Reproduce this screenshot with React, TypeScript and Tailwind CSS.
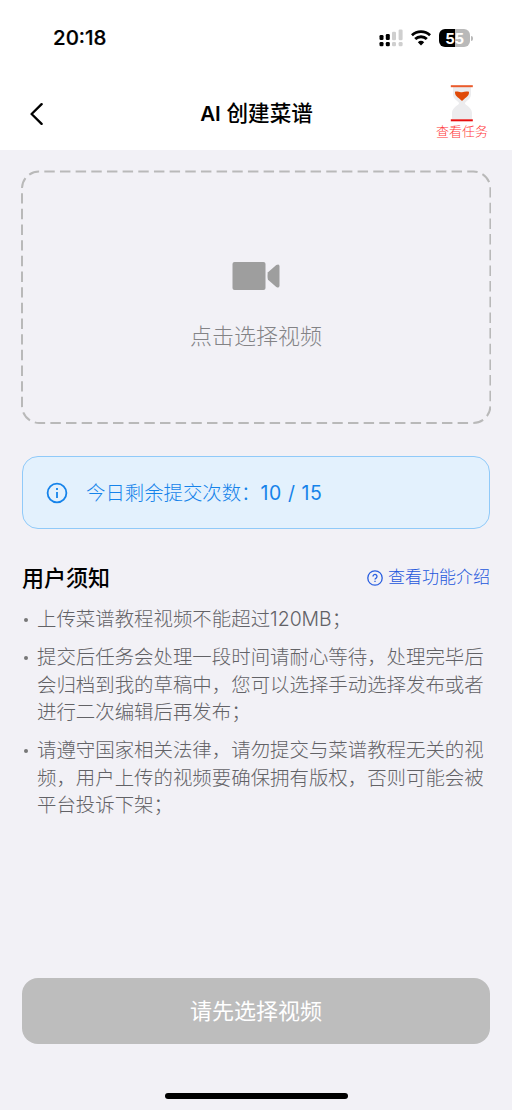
import type { ReactNode } from 'react'

const NOTES: string[][] = [
  ['上传菜谱教程视频不能超过120MB；'],
  ['提交后任务会处理一段时间请耐心等待，处理完毕后', '会归档到我的草稿中，您可以选择手动选择发布或者', '进行二次编辑后再发布；'],
  ['请遵守国家相关法律，请勿提交与菜谱教程无关的视', '频，用户上传的视频要确保拥有版权，否则可能会被', '平台投诉下架；'],
]

function StatusBar() {
  return (
    <div className="flex h-[76px] items-center justify-between pl-[53px] pr-[39px]">
      <span className="pt-px text-[20.5px] font-medium leading-none [-webkit-text-stroke:0.2px_#000]">20:18</span>
      <div className="flex items-center gap-[8px]">
        <svg width="24" height="18" viewBox="0 0 24 18">
          <g fill="#000">
            <rect x="0.5" y="6" width="4" height="5" rx="1.3" />
            <rect x="6.8" y="5" width="4" height="6" rx="1.3" />
            <rect x="0.5" y="13" width="4" height="4.3" rx="1.3" />
            <rect x="6.8" y="13" width="4" height="4.3" rx="1.3" />
          </g>
          <g fill="#cfcfcf">
            <rect x="13" y="2.7" width="4" height="8.6" rx="1.3" />
            <rect x="19.6" y="0.4" width="4" height="10.9" rx="1.3" />
            <rect x="13" y="13" width="4" height="4.3" rx="1.3" />
            <rect x="19.6" y="13" width="4" height="4.3" rx="1.3" />
          </g>
        </svg>
        <svg width="20" height="16" viewBox="0 0 20 16" fill="none" stroke="#000" strokeWidth="2.9">
          <path d="M0.9 5.3a13.2 13.2 0 0 1 18.2 0" />
          <path d="M4.2 9a8.4 8.4 0 0 1 11.6 0" />
          <path d="M10 15.6 6.8 12.3a4.7 4.7 0 0 1 6.4 0z" fill="#000" stroke="none" />
        </svg>
        <div className="flex items-center gap-px">
          <div className="flex h-[18px] w-[31px] items-center justify-center rounded-[6px] bg-linear-to-r from-black from-53% to-[#b9b9b9] to-53% text-[15px] font-bold leading-none tracking-[-0.3px] text-white">
            55
          </div>
          <div className="h-[5px] w-[2px] rounded-r-full bg-[#b9b9b9]" />
        </div>
      </div>
    </div>
  )
}

function Hourglass() {
  return (
    <svg width="24" height="37" viewBox="0 0 24 37">
      <path d="M3 2h18v7c0 4-2.800 6-5 7.700q-2 1.500 0 3c2.800 2 6 4.300 6 8.300v6H2v-6c0-4 3.200-6.300 6-8.300q2-1.500 0-3C5.800 15 3 13 3 9z" fill="#ececee" />
      <path d="M5 6.800C7.500 6 9.500 7.800 12 7.200S16.500 6.200 19 6.800C19.300 10.500 16.500 12.300 14.500 13.700L12.300 15.700H11.700L9.500 13.700C7.500 12.300 4.700 10.500 5 6.800z" fill="#e04a08" />
      <rect x="0.800" y="0.200" width="22" height="2" fill="#ea5b2c" />
      <rect x="0.800" y="34.300" width="22" height="2" fill="#e60f0f" />
    </svg>
  )
}

function Header() {
  return (
    <div className="grid h-[74px] grid-cols-[1fr_auto_1fr] items-center pr-[24px] pl-[29px]">
      <svg width="15" height="23" viewBox="0 0 15 23" fill="none" stroke="#000" strokeWidth="2.4" strokeLinecap="round" strokeLinejoin="round">
        <path d="M12.600 2.200 2.600 12 12.600 21.800" />
      </svg>
      <h1 className="-ml-[4px] pt-px text-[21.600px] font-medium leading-[30px]">
        <span className="text-[20.500px] font-semibold">AI</span> 创建菜谱
      </h1>
      <div className="flex flex-col items-center justify-self-end">
        <Hourglass />
        <span className="-mt-px text-[13px] font-light leading-[20px] text-[#ff3838]">查看任务</span>
      </div>
    </div>
  )
}

function UploadBox() {
  return (
    <div className="relative flex h-[254px] flex-col items-center">
      <svg className="absolute inset-0" width="470" height="254" viewBox="0 0 470 254" fill="none">
        <rect x="1" y="1.500" width="468.400" height="251.400" rx="17" stroke="#b9b9b9" strokeWidth="2" pathLength="1409" strokeDasharray="10.450 5.206" strokeDashoffset="-5.300" />
      </svg>
      <svg className="mt-[92px]" width="48" height="28" viewBox="0 0 48 28" fill="#9e9e9e">
        <rect x="0.500" y="0" width="33" height="28" rx="2" />
        <path d="M36 10.200 44.300 3.100Q47.500 1.500 47.500 4.500V23.500Q47.500 26.500 44.300 24.900L36 17.800Q35.500 17 35.500 14T36 10.200z" />
      </svg>
      <span className="mt-[30px] text-[22px] font-light leading-[32px] text-[#838386]">点击选择视频</span>
    </div>
  )
}

function QuotaBanner() {
  return (
    <div className="mx-px mt-[32px] flex h-[73px] items-center rounded-[16px] border-[1.500px] border-[#90caf9] bg-[#e3f1fd] pl-[23px] text-[19.400px] text-[#1583ea]">
      <svg width="22" height="22" viewBox="0 0 22 22" fill="none" stroke="#1583ea" strokeWidth="1.800">
        <circle cx="11" cy="11" r="9.400" />
        <path d="M11 10v6" />
        <path d="M11 6v2" />
      </svg>
      <span className="mt-[2px] ml-[18px] font-light">今日剩余提交次数：</span>
      <span className="mt-[2px] tracking-[0.6px]">10 / 15</span>
    </div>
  )
}

function Note({ children }: { children: ReactNode }) {
  return (
    <li className="flex text-[19.430px] font-light leading-[27.500px] text-[#626266]">
      <span className="mt-[12px] mr-[9px] ml-[2px] size-[4px] shrink-0 rounded-full bg-[#777]" />
      <div className="whitespace-nowrap">{children}</div>
    </li>
  )
}

export default function App() {
  return (
    <div className="flex h-[1110px] w-[512px] flex-col overflow-hidden bg-[#f2f1f6] font-['Inter','Noto_Sans_CJK_SC',sans-serif] text-black" lang="zh-CN">
      <div className="bg-white">
        <StatusBar />
        <Header />
      </div>
      <main className="flex flex-1 flex-col px-[21px] pt-[20px]">
        <UploadBox />
        <QuotaBanner />
        <div className="mt-[33px] flex h-[32px] items-center justify-between px-px">
          <h2 className="text-[22px] font-medium">用户须知</h2>
          <a className="flex items-center gap-[5px] text-[17px] font-light text-[#2457dc]">
            <svg width="16" height="16" viewBox="0 0 16 16" fill="none" stroke="#2a5fe0" strokeWidth="1.300">
              <circle cx="8" cy="8" r="7.200" />
              <path d="M6 6.500a2 2 0 1 1 3.100 1.600C8.300 8.600 8 8.900 8 9.600M8 10.700V12" />
            </svg>
            查看功能介绍
          </a>
        </div>
        <ul className="mt-[12px] flex flex-col gap-[10.500px] pl-px">
          {NOTES.map((lines) => (
            <Note key={lines[0]}>
              {lines.map((line) => (
                <p key={line}>{line}</p>
              ))}
            </Note>
          ))}
        </ul>
        <button className="mx-px mt-auto mb-[49px] h-[66px] rounded-[16px] bg-[#bdbdbd] text-[22px] text-white">请先选择视频</button>
        <div className="mb-[11px] h-[6px] w-[183px] self-center rounded-full bg-black" />
      </main>
    </div>
  )
}
